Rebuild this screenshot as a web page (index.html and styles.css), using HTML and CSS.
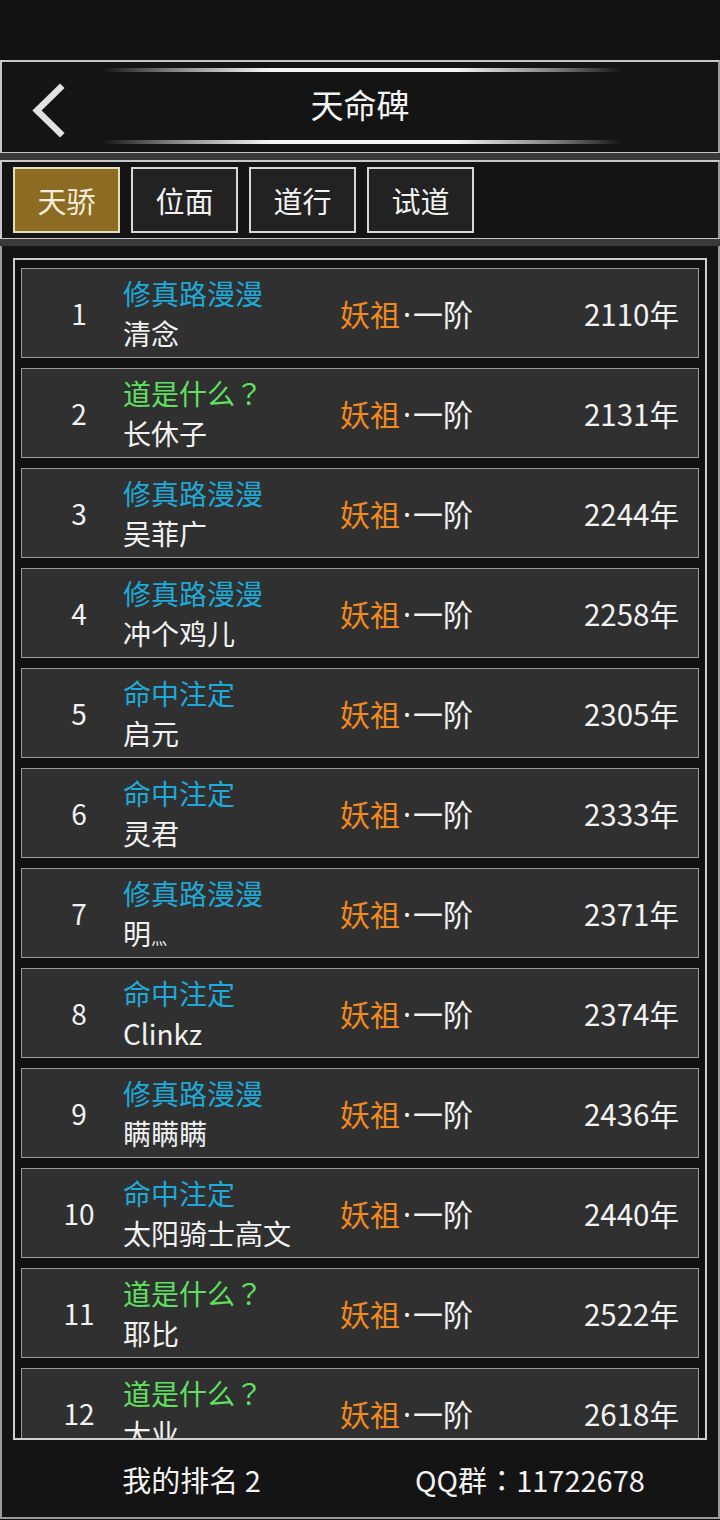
FILE: index.html
```html
<!DOCTYPE html>
<html lang="zh">
<head>
<meta charset="utf-8">
<link rel="stylesheet" href="styles.css">
</head>
<body>
<div class="status"></div>
<header class="header">
  <div class="deco deco-top"></div>
  <svg class="back" width="40" height="60" viewBox="0 0 40 60"><polyline points="31,5 8,27.5 31,50" fill="none" stroke="#e2e2e2" stroke-width="6.5" stroke-linecap="square"/></svg>
  <div class="title">天命碑</div>
  <div class="deco deco-bottom"></div>
</header>
<div class="band"></div>
<nav class="tabs">
  <div class="tab active">天骄</div>
  <div class="tab">位面</div>
  <div class="tab">道行</div>
  <div class="tab">试道</div>
</nav>
<div class="band"></div>
<section class="panel">
  <div class="frame">
    <div class="list">
      <div class="row"><div class="num">1</div><div class="names"><div class="sect blue">修真路漫漫</div><div class="name">清念</div></div><div class="realm"><span class="orange">妖祖</span><span class="dot">·</span>一阶</div><div class="year">2110年</div></div>
      <div class="row"><div class="num">2</div><div class="names"><div class="sect green">道是什么<span class="punct" lang="ja">？</span></div><div class="name">长休子</div></div><div class="realm"><span class="orange">妖祖</span><span class="dot">·</span>一阶</div><div class="year">2131年</div></div>
      <div class="row"><div class="num">3</div><div class="names"><div class="sect blue">修真路漫漫</div><div class="name">吴菲广</div></div><div class="realm"><span class="orange">妖祖</span><span class="dot">·</span>一阶</div><div class="year">2244年</div></div>
      <div class="row"><div class="num">4</div><div class="names"><div class="sect blue">修真路漫漫</div><div class="name">冲个鸡儿</div></div><div class="realm"><span class="orange">妖祖</span><span class="dot">·</span>一阶</div><div class="year">2258年</div></div>
      <div class="row"><div class="num">5</div><div class="names"><div class="sect blue">命中注定</div><div class="name">启元</div></div><div class="realm"><span class="orange">妖祖</span><span class="dot">·</span>一阶</div><div class="year">2305年</div></div>
      <div class="row"><div class="num">6</div><div class="names"><div class="sect blue">命中注定</div><div class="name">灵君</div></div><div class="realm"><span class="orange">妖祖</span><span class="dot">·</span>一阶</div><div class="year">2333年</div></div>
      <div class="row"><div class="num">7</div><div class="names"><div class="sect blue">修真路漫漫</div><div class="name">明<span class="small">灬</span></div></div><div class="realm"><span class="orange">妖祖</span><span class="dot">·</span>一阶</div><div class="year">2371年</div></div>
      <div class="row"><div class="num">8</div><div class="names"><div class="sect blue">命中注定</div><div class="name">Clinkz</div></div><div class="realm"><span class="orange">妖祖</span><span class="dot">·</span>一阶</div><div class="year">2374年</div></div>
      <div class="row"><div class="num">9</div><div class="names"><div class="sect blue">修真路漫漫</div><div class="name">瞒瞒瞒</div></div><div class="realm"><span class="orange">妖祖</span><span class="dot">·</span>一阶</div><div class="year">2436年</div></div>
      <div class="row"><div class="num">10</div><div class="names"><div class="sect blue">命中注定</div><div class="name">太阳骑士高文</div></div><div class="realm"><span class="orange">妖祖</span><span class="dot">·</span>一阶</div><div class="year">2440年</div></div>
      <div class="row"><div class="num">11</div><div class="names"><div class="sect green">道是什么<span class="punct" lang="ja">？</span></div><div class="name">耶比</div></div><div class="realm"><span class="orange">妖祖</span><span class="dot">·</span>一阶</div><div class="year">2522年</div></div>
      <div class="row"><div class="num">12</div><div class="names"><div class="sect green">道是什么<span class="punct" lang="ja">？</span></div><div class="name">大业</div></div><div class="realm"><span class="orange">妖祖</span><span class="dot">·</span>一阶</div><div class="year">2618年</div></div>
    </div>
  </div>
  <footer class="footer">
    <div class="foot-item foot-left">我的排名 2</div>
    <div class="foot-item foot-right">QQ群<span class="punct" lang="ja">：</span>11722678</div>
  </footer>
</section>
</body>
</html>
```
FILE: styles.css
```css
* { box-sizing: border-box; }
html, body { margin: 0; padding: 0; }
body {
  width: 720px;
  height: 1520px;
  background: #111;
  color: #f2f2f2;
  font-family: "Noto Sans CJK SC", "Noto Sans", sans-serif;
  overflow: hidden;
  text-spacing-trim: space-all;
}
.status { height: 60px; background: #111; }
.header {
  position: relative;
  height: 93px;
  border: 2px solid #c8c8c8;
  border-right-color: #9a9a9a;
  border-bottom-width: 1px;
  background: #141414;
  display: flex;
  align-items: center;
  justify-content: center;
}
.deco {
  position: absolute;
  left: 100px;
  width: 520px;
  height: 4px;
  border-radius: 2px;
  background: linear-gradient(90deg, rgba(255,255,255,0) 0%, rgba(210,210,210,0.6) 14%, #f4f4f4 32%, #f4f4f4 68%, rgba(210,210,210,0.6) 86%, rgba(255,255,255,0) 100%);
}
.deco-top { top: 6px; }
.deco-bottom { bottom: 8px; }
.back { position: absolute; left: 27px; top: 21px; }
.title { font-size: 33px; line-height: 40px; color: #f2f2f2; margin-top: -6px; }
.band { height: 7px; background: #3a3a3a; }
.tabs {
  height: 79px;
  border: 2px solid #c8c8c8;
  border-right-color: #9a9a9a;
  border-bottom-width: 1px;
  background: #141414;
  display: flex;
  gap: 11px;
  padding: 5px 0 0 11px;
}
.tab {
  width: 107px;
  height: 66px;
  border: 2px solid #d8d8d8;
  background: #222;
  font-size: 29px;
  line-height: 62px;
  text-align: center;
  color: #f2f2f2;
}
.tab.active { background: #8b6c22; border-color: #e6dcc0; color: #f5eedc; }
.panel {
  height: 1273px;
  border-left: 2px solid #9a9a9a;
  border-right: 2px solid #9a9a9a;
  border-bottom: 2px solid #9a9a9a;
  background: #141414;
  padding: 12px 11px 0 11px;
  display: flex;
  flex-direction: column;
}
.frame {
  height: 1182px;
  flex: none;
  border: 2px solid #cfcfcf;
  overflow: hidden;
  padding: 8px 6px 0 6px;
  background: #111;
}
.list { display: flex; flex-direction: column; gap: 10px; }
.row {
  flex: none;
  height: 90px;
  border: 1px solid #9a9a9a;
  background: #303030;
  display: flex;
  align-items: flex-start;
  padding: 4px 19px 0 0;
}
.num {
  width: 114px;
  padding-left: 14px;
  padding-right: 14px;
  text-align: center;
  font-size: 28px;
  line-height: 80px;
}
.names { width: 217px; margin-left: -13px; }
.sect, .name { font-size: 28px; line-height: 40px; white-space: nowrap; }
.blue { color: #1ea9d9; }
.green { color: #5fe060; }
.orange { color: #f08a1f; }
.small { font-size: 16px; }
.punct { font-family: "Noto Sans CJK JP", sans-serif; }
.realm { font-size: 30px; line-height: 80px; white-space: nowrap; }
.dot { font-family: "Noto Sans", sans-serif; padding: 0 2px 0 3px; }
.year { flex: 1; text-align: right; font-size: 29.5px; line-height: 80px; }
.footer {
  flex: 1;
  display: flex;
  align-items: center;
}
.foot-item { flex: none; text-align: center; font-size: 29px; line-height: 40px; white-space: nowrap; }
.foot-left { width: 357px; }
.foot-right { width: 320px; }
```
